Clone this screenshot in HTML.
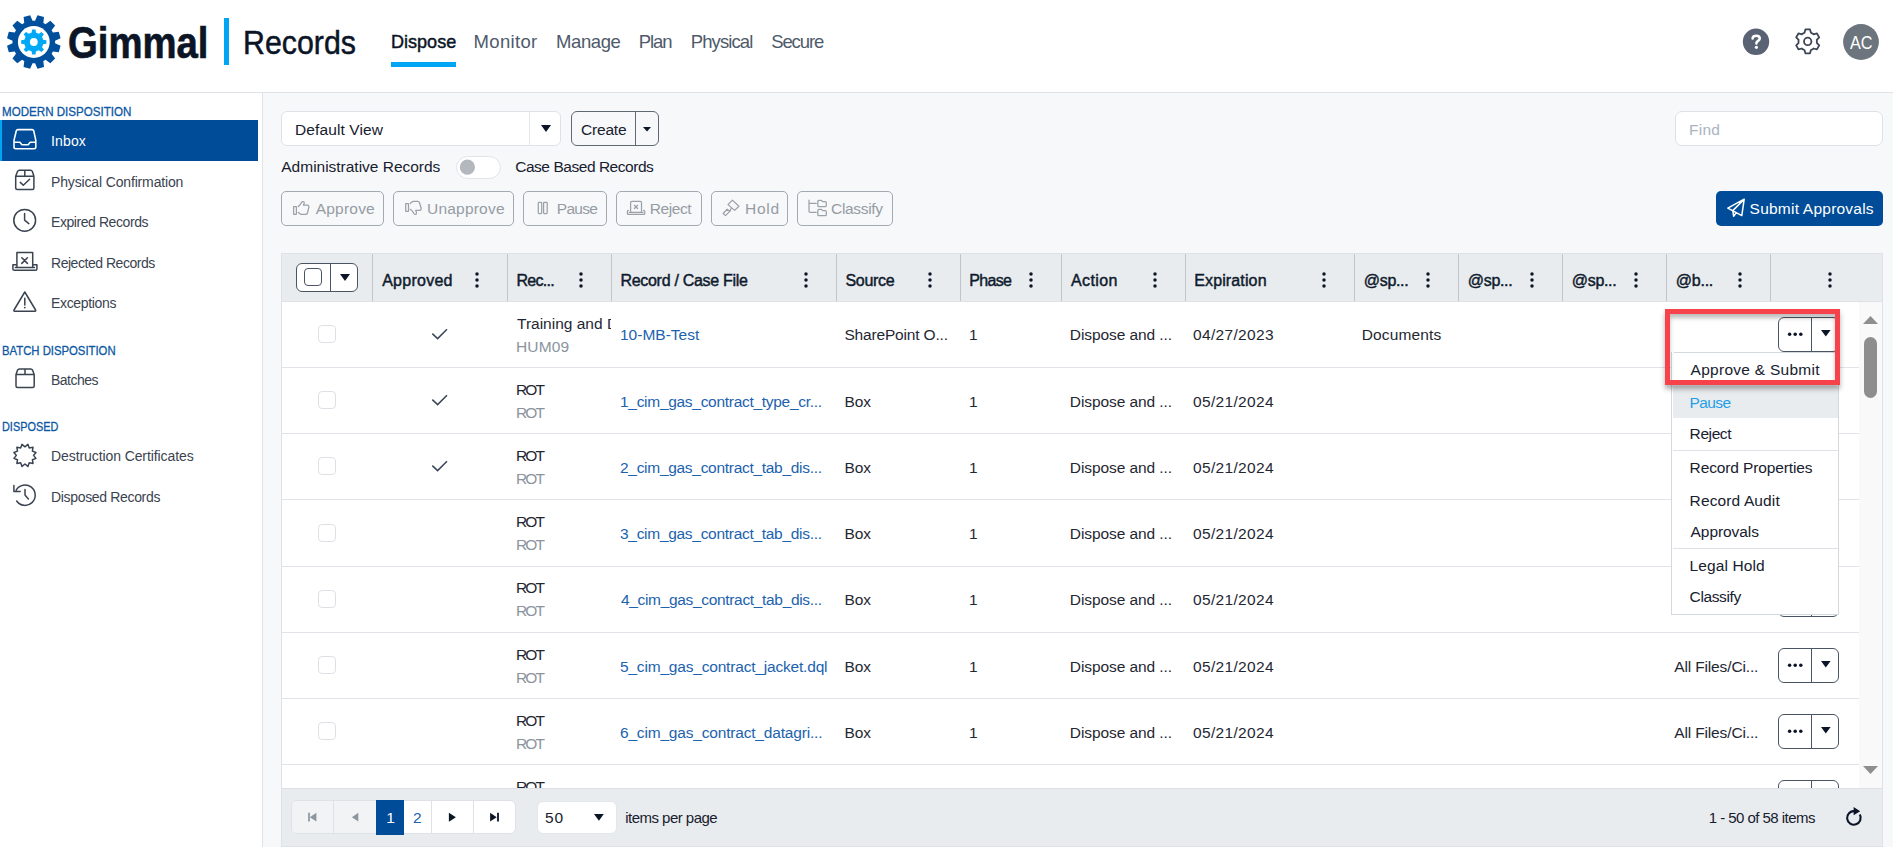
<!DOCTYPE html>
<html><head><meta charset="utf-8"><title>Gimmal Records - Dispose</title>
<style>
html,body{margin:0;padding:0;}
body{width:1893px;height:847px;overflow:hidden;position:relative;background:#f7f8fa;font-family:"Liberation Sans",sans-serif;}
.b{position:absolute;}
.t{position:absolute;white-space:nowrap;line-height:1;font-family:"Liberation Sans",sans-serif;}
</style></head><body>
<div class="b" style="left:0px;top:0px;width:1893px;height:92px;background:#fff;"></div>
<div class="b" style="left:0px;top:92px;width:1893px;height:1px;background:#dfe3e8;"></div>
<div class="b" style="left:0px;top:93px;width:262px;height:754px;background:#fff;"></div>
<div class="b" style="left:262px;top:93px;width:1px;height:754px;background:#dfe3e8;"></div>
<div class="b" style="left:0px;top:120px;width:258px;height:41px;background:#004c98;"></div>
<div class="b" style="left:0px;top:120px;width:2px;height:41px;background:#00a6f4;"></div>
<svg class="b" style="left:0;top:0" width="80" height="80" viewBox="0 0 80 80">
<path d="M35.08,20.74 L37.46,15.25 L44.01,17.00 L43.33,22.95 L43.89,23.24 L44.45,23.55 L45.00,23.88 L45.54,24.22 L50.34,20.66 L55.14,25.46 L51.58,30.26 L51.92,30.80 L52.25,31.35 L52.56,31.91 L52.85,32.47 L58.80,31.79 L60.55,38.34 L55.06,40.72 L55.09,41.36 L55.10,42.00 L55.09,42.64 L55.06,43.28 L60.55,45.66 L58.80,52.21 L52.85,51.53 L52.56,52.09 L52.25,52.65 L51.92,53.20 L51.58,53.74 L55.14,58.54 L50.34,63.34 L45.54,59.78 L45.00,60.12 L44.45,60.45 L43.89,60.76 L43.33,61.05 L44.01,67.00 L37.46,68.75 L35.08,63.26 L34.44,63.29 L33.80,63.30 L33.16,63.29 L32.52,63.26 L30.14,68.75 L23.59,67.00 L24.27,61.05 L23.71,60.76 L23.15,60.45 L22.60,60.12 L22.06,59.78 L17.26,63.34 L12.46,58.54 L16.02,53.74 L15.68,53.20 L15.35,52.65 L15.04,52.09 L14.75,51.53 L8.80,52.21 L7.05,45.66 L12.54,43.28 L12.51,42.64 L12.50,42.00 L12.51,41.36 L12.54,40.72 L7.05,38.34 L8.80,31.79 L14.75,32.47 L15.04,31.91 L15.35,31.35 L15.68,30.80 L16.02,30.26 L12.46,25.46 L17.26,20.66 L22.06,24.22 L22.60,23.88 L23.15,23.55 L23.71,23.24 L24.27,22.95 L23.59,17.00 L30.14,15.25 L32.52,20.74 L33.16,20.71 L33.80,20.70 L34.44,20.71Z" fill="#00509e"/>
<circle cx="33.8" cy="42" r="15.9" fill="#fff"/>
<path d="M31.62,32.65 L32.11,29.41 L35.49,29.41 L35.98,32.65 L36.74,32.86 L37.47,33.13 L38.19,33.46 L38.87,33.85 L41.50,31.90 L43.90,34.30 L41.95,36.93 L42.34,37.61 L42.67,38.33 L42.94,39.06 L43.15,39.82 L46.39,40.31 L46.39,43.69 L43.15,44.18 L42.94,44.94 L42.67,45.67 L42.34,46.39 L41.95,47.07 L43.90,49.70 L41.50,52.10 L38.87,50.15 L38.19,50.54 L37.47,50.87 L36.74,51.14 L35.98,51.35 L35.49,54.59 L32.11,54.59 L31.62,51.35 L30.86,51.14 L30.13,50.87 L29.41,50.54 L28.73,50.15 L26.10,52.10 L23.70,49.70 L25.65,47.07 L25.26,46.39 L24.93,45.67 L24.66,44.94 L24.45,44.18 L21.21,43.69 L21.21,40.31 L24.45,39.82 L24.66,39.06 L24.93,38.33 L25.26,37.61 L25.65,36.93 L23.70,34.30 L26.10,31.90 L28.73,33.85 L29.41,33.46 L30.13,33.13 L30.86,32.86Z" fill="#00a8f5"/>
<circle cx="33.8" cy="42" r="3.9" fill="#fff"/>
</svg>
<div class="b" style="left:224px;top:18px;width:5px;height:47px;background:#00a6f4;"></div>
<div class="b" style="left:391px;top:62px;width:65px;height:5px;background:#00a6f4;"></div>
<svg class="b" style="left:1730px;top:15px" width="160" height="55" viewBox="1730 15 160 55">
<circle cx="1756" cy="41.8" r="13.2" fill="#596373"/>
<path d="M1752.6,38.6 C1752.6,36.6 1754.2,35.8 1756.2,35.8 C1758.4,35.8 1759.8,37 1759.8,38.6 C1759.8,40.6 1756.6,41 1756.4,42.8 L1756.4,43.6" fill="none" stroke="#fff" stroke-width="2.5" stroke-linecap="round"/>
<circle cx="1756.4" cy="47.3" r="1.6" fill="#fff"/>
<path d="M1804.47,32.79 L1805.41,29.42 L1809.99,29.42 L1810.93,32.79 L1811.63,33.08 L1812.30,33.43 L1812.94,33.84 L1813.55,34.30 L1816.94,33.43 L1819.22,37.39 L1816.78,39.89 L1816.87,40.64 L1816.90,41.40 L1816.87,42.16 L1816.78,42.91 L1819.22,45.41 L1816.94,49.37 L1813.55,48.50 L1812.94,48.96 L1812.30,49.37 L1811.63,49.72 L1810.93,50.01 L1809.99,53.38 L1805.41,53.38 L1804.47,50.01 L1803.77,49.72 L1803.10,49.37 L1802.46,48.96 L1801.85,48.50 L1798.46,49.37 L1796.18,45.41 L1798.62,42.91 L1798.53,42.16 L1798.50,41.40 L1798.53,40.64 L1798.62,39.89 L1796.18,37.39 L1798.46,33.43 L1801.85,34.30 L1802.46,33.84 L1803.10,33.43 L1803.77,33.08Z" fill="none" stroke="#3b4554" stroke-width="1.8" stroke-linejoin="round"/>
<circle cx="1807.7" cy="41.4" r="3.7" fill="none" stroke="#3b4554" stroke-width="1.8"/>
<circle cx="1861" cy="42" r="17.9" fill="#6c757d"/>
</svg>
<div class="b" style="left:281px;top:111px;width:280px;height:35px;background:#fff;border:1px solid #dee2e6;border-radius:6px;box-sizing:border-box;"></div>
<div class="b" style="left:529px;top:112px;width:1px;height:33px;background:#e3e6ea;"></div>
<svg class="b" style="left:541.0px;top:124.5px" width="11.0" height="8.0"><path d="M0,0 L10.00,0 L5.00,7.00Z" fill="#0b1526"/></svg>
<div class="b" style="left:571px;top:111px;width:88px;height:35px;border:1px solid #5f6873;border-radius:6px;box-sizing:border-box;"></div>
<div class="b" style="left:635px;top:112px;width:1px;height:33px;background:#5f6873;"></div>
<svg class="b" style="left:643.0px;top:126.6px" width="9.0" height="5.4"><path d="M0,0 L8.00,0 L4.00,4.40Z" fill="#0b1526"/></svg>
<div class="b" style="left:456px;top:156px;width:45px;height:23px;background:#fff;border:1px solid #e1e4e8;border-radius:12px;box-sizing:border-box;"></div>
<svg class="b" style="left:455px;top:155px" width="30" height="25"><circle cx="12.4" cy="12.2" r="7.6" fill="#b3b8bf"/></svg>
<div class="b" style="left:281px;top:191px;width:103px;height:35px;border:1px solid #a2a9b0;border-radius:5px;box-sizing:border-box;"></div>
<div class="b" style="left:393px;top:191px;width:121px;height:35px;border:1px solid #a2a9b0;border-radius:5px;box-sizing:border-box;"></div>
<div class="b" style="left:523px;top:191px;width:84px;height:35px;border:1px solid #a2a9b0;border-radius:5px;box-sizing:border-box;"></div>
<div class="b" style="left:616px;top:191px;width:86px;height:35px;border:1px solid #a2a9b0;border-radius:5px;box-sizing:border-box;"></div>
<div class="b" style="left:711px;top:191px;width:77px;height:35px;border:1px solid #a2a9b0;border-radius:5px;box-sizing:border-box;"></div>
<div class="b" style="left:797px;top:191px;width:96px;height:35px;border:1px solid #a2a9b0;border-radius:5px;box-sizing:border-box;"></div>
<svg class="b" style="left:0;top:0" width="900" height="240" viewBox="0 0 900 240">
<rect x="293.6" y="206.6" width="2.8" height="7.8" rx="0.3" fill="none" stroke="#9aa1a8" stroke-width="1.25" stroke-linejoin="round" stroke-linecap="round"/>
<path d="M298.2,206.6 C299.8,205.6 300.6,204.4 301.4,202.6 C301.9,201.6 303.2,201.3 304,202 C304.6,202.6 304.4,203.6 303.4,205.2 H307.3 C308.4,205.2 309.1,206.1 308.9,207.1 L307.4,213 C307.2,213.9 306.5,214.4 305.6,214.4 H301.3 C300.2,214.4 299.3,213.4 298.2,212.4" fill="none" stroke="#9aa1a8" stroke-width="1.25" stroke-linejoin="round" stroke-linecap="round"/>
<rect x="405.7" y="203.5" width="2.8" height="7.8" rx="0.3" fill="none" stroke="#9aa1a8" stroke-width="1.25" stroke-linejoin="round" stroke-linecap="round"/>
<path d="M410.2,203.6 C411.2,202.4 412.2,201.4 413.6,201.4 H417.8 C418.6,201.4 419.2,201.9 419.5,202.7 L421.1,208 C421.4,209.3 420.8,210.3 419.6,210.3 H415.6 C416.4,211.8 416.9,212.8 416.5,213.6 C416,214.5 414.8,214.6 414.2,213.8 C413.2,212.2 412.4,210.4 410.2,209.3" fill="none" stroke="#9aa1a8" stroke-width="1.25" stroke-linejoin="round" stroke-linecap="round"/>
<rect x="538.3" y="202.3" width="3.4" height="11.2" rx="0.8" fill="none" stroke="#9aa1a8" stroke-width="1.25" stroke-linejoin="round" stroke-linecap="round"/>
<rect x="543.6" y="202.3" width="3.6" height="11.2" rx="0.8" fill="none" stroke="#9aa1a8" stroke-width="1.25" stroke-linejoin="round" stroke-linecap="round"/>
<path d="M630.6,212.2 V202.6 Q630.6,201.3 631.9,201.3 H640.2 Q641.5,201.3 641.5,202.6 V212.2 M629.3,212.4 H642.9 M628.4,210.4 Q627.4,210.5 627.4,211.6 V213.4 Q627.4,214.4 628.4,214.4 H643.8 Q644.8,214.4 644.8,213.4 V211.6 Q644.8,210.5 643.6,210.4 M634.4,205.3 L637.6,208.5 M637.6,205.3 L634.4,208.5" fill="none" stroke="#9aa1a8" stroke-width="1.25" stroke-linejoin="round" stroke-linecap="round"/>
<path d="M732.4,200.1 L738.9,206.3 L734.6,210.4 L728,204.6 Z" fill="none" stroke="#9aa1a8" stroke-width="1.25" stroke-linejoin="round" stroke-linecap="round"/>
<path d="M727.2,209.2 L729.8,211.4 L725.5,215.6 L723.1,213.5 Z M729.8,211.4 L731.3,208.3" fill="none" stroke="#9aa1a8" stroke-width="1.25" stroke-linejoin="round" stroke-linecap="round"/>
<path d="M809,200.2 V211.2 Q809,212.3 810.1,212.3 H816.2 M809,203.3 H816.2" fill="none" stroke="#9aa1a8" stroke-width="1.25" stroke-linejoin="round" stroke-linecap="round"/>
<path d="M817.8,201.4 Q817.8,200.3 818.8,200.3 H821.4 L822.6,201.6 H825.4 Q826.3,201.6 826.3,202.5 V205.6 Q826.3,206.5 825.4,206.5 H818.7 Q817.8,206.5 817.8,205.6 Z" fill="none" stroke="#9aa1a8" stroke-width="1.25" stroke-linejoin="round" stroke-linecap="round"/>
<path d="M817.8,210.5 Q817.8,209.4 818.8,209.4 H821.4 L822.6,210.6 H825.4 Q826.3,210.6 826.3,211.5 V214.7 Q826.3,215.6 825.4,215.6 H818.7 Q817.8,215.6 817.8,214.7 Z" fill="none" stroke="#9aa1a8" stroke-width="1.25" stroke-linejoin="round" stroke-linecap="round"/>
</svg>
<div class="b" style="left:1675px;top:111px;width:208px;height:35px;background:#fff;border:1px solid #dee2e6;border-radius:7px;box-sizing:border-box;"></div>
<div class="b" style="left:1716px;top:191px;width:167px;height:35px;background:#004c98;border-radius:5px;"></div>
<svg class="b" style="left:1725px;top:196px" width="24" height="24" viewBox="0 0 24 24">
<path d="M2.8,12.2 L19.2,3.2 L16.8,19.6 Z M19.2,3.2 L7.8,14.6 L8.6,20.2 L11.6,16.4" fill="none" stroke="#fff" stroke-width="1.5" stroke-linejoin="round"/>
</svg>
<div class="b" style="left:281px;top:253px;width:1602px;height:594px;background:#fff;border:1px solid #dee2e6;box-sizing:border-box;"></div>
<div class="b" style="left:281px;top:253px;width:1602px;height:48px;background:#e9ecef;border:1px solid #dee2e6;border-bottom:none;box-sizing:border-box;"></div>
<div class="b" style="left:281px;top:301px;width:1602px;height:1px;background:#dee2e6;"></div>
<div class="b" style="left:372px;top:254px;width:1px;height:47px;background:#bfc5cb;"></div>
<div class="b" style="left:507px;top:254px;width:1px;height:47px;background:#bfc5cb;"></div>
<div class="b" style="left:611px;top:254px;width:1px;height:47px;background:#bfc5cb;"></div>
<div class="b" style="left:836px;top:254px;width:1px;height:47px;background:#bfc5cb;"></div>
<div class="b" style="left:960px;top:254px;width:1px;height:47px;background:#bfc5cb;"></div>
<div class="b" style="left:1061px;top:254px;width:1px;height:47px;background:#bfc5cb;"></div>
<div class="b" style="left:1185px;top:254px;width:1px;height:47px;background:#bfc5cb;"></div>
<div class="b" style="left:1354px;top:254px;width:1px;height:47px;background:#bfc5cb;"></div>
<div class="b" style="left:1458px;top:254px;width:1px;height:47px;background:#bfc5cb;"></div>
<div class="b" style="left:1562px;top:254px;width:1px;height:47px;background:#bfc5cb;"></div>
<div class="b" style="left:1666px;top:254px;width:1px;height:47px;background:#bfc5cb;"></div>
<div class="b" style="left:1770px;top:254px;width:1px;height:47px;background:#bfc5cb;"></div>
<svg class="b" style="left:473px;top:269.5px" width="8" height="20"><circle cx="4" cy="4" r="1.75" fill="#0b1526"/><circle cx="4" cy="10" r="1.75" fill="#0b1526"/><circle cx="4" cy="16" r="1.75" fill="#0b1526"/></svg>
<svg class="b" style="left:577px;top:269.5px" width="8" height="20"><circle cx="4" cy="4" r="1.75" fill="#0b1526"/><circle cx="4" cy="10" r="1.75" fill="#0b1526"/><circle cx="4" cy="16" r="1.75" fill="#0b1526"/></svg>
<svg class="b" style="left:802px;top:269.5px" width="8" height="20"><circle cx="4" cy="4" r="1.75" fill="#0b1526"/><circle cx="4" cy="10" r="1.75" fill="#0b1526"/><circle cx="4" cy="16" r="1.75" fill="#0b1526"/></svg>
<svg class="b" style="left:926px;top:269.5px" width="8" height="20"><circle cx="4" cy="4" r="1.75" fill="#0b1526"/><circle cx="4" cy="10" r="1.75" fill="#0b1526"/><circle cx="4" cy="16" r="1.75" fill="#0b1526"/></svg>
<svg class="b" style="left:1027px;top:269.5px" width="8" height="20"><circle cx="4" cy="4" r="1.75" fill="#0b1526"/><circle cx="4" cy="10" r="1.75" fill="#0b1526"/><circle cx="4" cy="16" r="1.75" fill="#0b1526"/></svg>
<svg class="b" style="left:1151px;top:269.5px" width="8" height="20"><circle cx="4" cy="4" r="1.75" fill="#0b1526"/><circle cx="4" cy="10" r="1.75" fill="#0b1526"/><circle cx="4" cy="16" r="1.75" fill="#0b1526"/></svg>
<svg class="b" style="left:1320px;top:269.5px" width="8" height="20"><circle cx="4" cy="4" r="1.75" fill="#0b1526"/><circle cx="4" cy="10" r="1.75" fill="#0b1526"/><circle cx="4" cy="16" r="1.75" fill="#0b1526"/></svg>
<svg class="b" style="left:1424px;top:269.5px" width="8" height="20"><circle cx="4" cy="4" r="1.75" fill="#0b1526"/><circle cx="4" cy="10" r="1.75" fill="#0b1526"/><circle cx="4" cy="16" r="1.75" fill="#0b1526"/></svg>
<svg class="b" style="left:1528px;top:269.5px" width="8" height="20"><circle cx="4" cy="4" r="1.75" fill="#0b1526"/><circle cx="4" cy="10" r="1.75" fill="#0b1526"/><circle cx="4" cy="16" r="1.75" fill="#0b1526"/></svg>
<svg class="b" style="left:1632px;top:269.5px" width="8" height="20"><circle cx="4" cy="4" r="1.75" fill="#0b1526"/><circle cx="4" cy="10" r="1.75" fill="#0b1526"/><circle cx="4" cy="16" r="1.75" fill="#0b1526"/></svg>
<svg class="b" style="left:1736px;top:269.5px" width="8" height="20"><circle cx="4" cy="4" r="1.75" fill="#0b1526"/><circle cx="4" cy="10" r="1.75" fill="#0b1526"/><circle cx="4" cy="16" r="1.75" fill="#0b1526"/></svg>
<svg class="b" style="left:1826px;top:269.5px" width="8" height="20"><circle cx="4" cy="4" r="1.75" fill="#0b1526"/><circle cx="4" cy="10" r="1.75" fill="#0b1526"/><circle cx="4" cy="16" r="1.75" fill="#0b1526"/></svg>
<div class="b" style="left:296px;top:263px;width:62px;height:29px;background:#fff;border:1px solid #4a5563;border-radius:6px;box-sizing:border-box;"></div>
<div class="b" style="left:330px;top:264px;width:1px;height:27px;background:#4a5563;"></div>
<div class="b" style="left:304px;top:268px;width:18px;height:18px;border:1px solid #4a5563;border-radius:4px;box-sizing:border-box;"></div>
<svg class="b" style="left:340.0px;top:273.5px" width="11.0" height="8.0"><path d="M0,0 L10.00,0 L5.00,7.00Z" fill="#0b1526"/></svg>
<div class="b" style="left:1859px;top:302px;width:23px;height:486px;background:#f9f9f9;"></div>
<svg class="b" style="left:1863.0px;top:316.0px" width="16.0" height="9.0"><path d="M0,8.00 L15.00,8.00 L7.50,0Z" fill="#8e8e8e"/></svg>
<div class="b" style="left:1864px;top:337px;width:13px;height:61px;background:#8e8e8e;border-radius:6.5px;"></div>
<svg class="b" style="left:1863.0px;top:766.0px" width="16.0" height="9.0"><path d="M0,0 L15.00,0 L7.50,8.00Z" fill="#8e8e8e"/></svg>
<div class="b" style="left:282px;top:367px;width:1577px;height:1px;background:#e0e3e7;"></div>
<div class="b" style="left:282px;top:433px;width:1577px;height:1px;background:#e0e3e7;"></div>
<div class="b" style="left:282px;top:499px;width:1577px;height:1px;background:#e0e3e7;"></div>
<div class="b" style="left:282px;top:566px;width:1577px;height:1px;background:#e0e3e7;"></div>
<div class="b" style="left:282px;top:632px;width:1577px;height:1px;background:#e0e3e7;"></div>
<div class="b" style="left:282px;top:698px;width:1577px;height:1px;background:#e0e3e7;"></div>
<div class="b" style="left:282px;top:764px;width:1577px;height:1px;background:#e0e3e7;"></div>
<div class="b" style="left:318px;top:325px;width:18px;height:18px;background:#fff;border:1px solid #dde1e5;border-radius:4px;box-sizing:border-box;"></div>
<svg class="b" style="left:428px;top:324.0px" width="24" height="20"><path d="M4.3,9.6 L9.6,14.6 L19,5.2" fill="none" stroke="#3a4657" stroke-width="1.5"/></svg>
<div class="b" style="left:318px;top:391px;width:18px;height:18px;background:#fff;border:1px solid #dde1e5;border-radius:4px;box-sizing:border-box;"></div>
<svg class="b" style="left:428px;top:390.0px" width="24" height="20"><path d="M4.3,9.6 L9.6,14.6 L19,5.2" fill="none" stroke="#3a4657" stroke-width="1.5"/></svg>
<div class="b" style="left:318px;top:457px;width:18px;height:18px;background:#fff;border:1px solid #dde1e5;border-radius:4px;box-sizing:border-box;"></div>
<svg class="b" style="left:428px;top:456.0px" width="24" height="20"><path d="M4.3,9.6 L9.6,14.6 L19,5.2" fill="none" stroke="#3a4657" stroke-width="1.5"/></svg>
<div class="b" style="left:318px;top:524px;width:18px;height:18px;background:#fff;border:1px solid #dde1e5;border-radius:4px;box-sizing:border-box;"></div>
<div class="b" style="left:318px;top:590px;width:18px;height:18px;background:#fff;border:1px solid #dde1e5;border-radius:4px;box-sizing:border-box;"></div>
<div class="b" style="left:1778px;top:582px;width:61px;height:35px;background:#fff;border:1px solid #4a5563;border-radius:6px;box-sizing:border-box;"></div>
<div class="b" style="left:1811px;top:583px;width:1px;height:33px;background:#4a5563;"></div>
<svg class="b" style="left:1786px;top:594.0px" width="20" height="10"><circle cx="3.6" cy="5.2" r="1.75" fill="#0b1526"/><circle cx="9.2" cy="5.2" r="1.75" fill="#0b1526"/><circle cx="14.8" cy="5.2" r="1.75" fill="#0b1526"/></svg>
<svg class="b" style="left:1821.3px;top:594.7px" width="10.6" height="7.6"><path d="M0,0 L9.60,0 L4.80,6.60Z" fill="#0b1526"/></svg>
<div class="b" style="left:318px;top:656px;width:18px;height:18px;background:#fff;border:1px solid #dde1e5;border-radius:4px;box-sizing:border-box;"></div>
<div class="b" style="left:1778px;top:648px;width:61px;height:35px;background:#fff;border:1px solid #4a5563;border-radius:6px;box-sizing:border-box;"></div>
<div class="b" style="left:1811px;top:649px;width:1px;height:33px;background:#4a5563;"></div>
<svg class="b" style="left:1786px;top:660.0px" width="20" height="10"><circle cx="3.6" cy="5.2" r="1.75" fill="#0b1526"/><circle cx="9.2" cy="5.2" r="1.75" fill="#0b1526"/><circle cx="14.8" cy="5.2" r="1.75" fill="#0b1526"/></svg>
<svg class="b" style="left:1821.3px;top:660.7px" width="10.6" height="7.6"><path d="M0,0 L9.60,0 L4.80,6.60Z" fill="#0b1526"/></svg>
<div class="b" style="left:318px;top:722px;width:18px;height:18px;background:#fff;border:1px solid #dde1e5;border-radius:4px;box-sizing:border-box;"></div>
<div class="b" style="left:1778px;top:714px;width:61px;height:35px;background:#fff;border:1px solid #4a5563;border-radius:6px;box-sizing:border-box;"></div>
<div class="b" style="left:1811px;top:715px;width:1px;height:33px;background:#4a5563;"></div>
<svg class="b" style="left:1786px;top:726.0px" width="20" height="10"><circle cx="3.6" cy="5.2" r="1.75" fill="#0b1526"/><circle cx="9.2" cy="5.2" r="1.75" fill="#0b1526"/><circle cx="14.8" cy="5.2" r="1.75" fill="#0b1526"/></svg>
<svg class="b" style="left:1821.3px;top:726.7px" width="10.6" height="7.6"><path d="M0,0 L9.60,0 L4.80,6.60Z" fill="#0b1526"/></svg>
<div class="b" style="left:1778px;top:780px;width:61px;height:35px;background:#fff;border:1px solid #4a5563;border-radius:6px;box-sizing:border-box;"></div>
<div class="b" style="left:1811px;top:781px;width:1px;height:33px;background:#4a5563;"></div>
<svg class="b" style="left:1786px;top:792.0px" width="20" height="10"><circle cx="3.6" cy="5.2" r="1.75" fill="#0b1526"/><circle cx="9.2" cy="5.2" r="1.75" fill="#0b1526"/><circle cx="14.8" cy="5.2" r="1.75" fill="#0b1526"/></svg>
<svg class="b" style="left:1821.3px;top:792.7px" width="10.6" height="7.6"><path d="M0,0 L9.60,0 L4.80,6.60Z" fill="#0b1526"/></svg>
<svg class="b" style="left:0;top:100px" width="60" height="420" viewBox="0 100 60 420">
<path d="M17.9,129.6 H32.1 Q33.3,129.6 33.7,130.7 L35.8,140.4 V147.1 Q35.8,148.8 34.1,148.8 H15.7 Q14,148.8 14,147.1 V140.4 L16.3,130.7 Q16.7,129.6 17.9,129.6 Z M14,142.3 H19.5 Q20.2,142.3 20.6,143 L21.5,144.2 Q22,144.8 22.8,144.8 H27.4 Q28.2,144.8 28.6,144.2 L29.5,143 Q29.9,142.3 30.6,142.3 H35.8" fill="none" stroke="#fff" stroke-width="1.6" stroke-linejoin="round" stroke-linecap="round"/>
<path d="M15.7,176.3 L17.5,171.5 Q18,170.3 19.3,170.3 H30.6 Q31.9,170.3 32.4,171.5 L33.9,176.3 V188 Q33.9,189.5 32.4,189.5 H17.2 Q15.7,189.5 15.7,188 Z M15.7,176.3 H33.9 M24.8,170.3 V176.3 M20.3,182.4 L23.3,185.3 L29.6,179.3" fill="none" stroke="#3a4350" stroke-width="1.5" stroke-linejoin="round" stroke-linecap="round"/>
<circle cx="24.7" cy="220.3" r="10.9" fill="none" stroke="#3a4350" stroke-width="1.5" stroke-linejoin="round" stroke-linecap="round"/>
<path d="M24.6,213.6 v6.6 l4.2,3.4" fill="none" stroke="#3a4350" stroke-width="1.5" stroke-linejoin="round" stroke-linecap="round"/>
<path d="M16.9,267.4 V252.4 H32.7 V267.4 M15.6,264.8 H12.9 V269 Q12.9,270.3 14.2,270.3 H35.6 Q36.9,270.3 36.9,269 V264.8 H34 M15.4,267.6 H34.4 M21.8,257.8 l5.6,5.6 M27.4,257.8 l-5.6,5.6" fill="none" stroke="#3a4350" stroke-width="1.5" stroke-linejoin="round" stroke-linecap="round"/>
<path d="M24.8,292 L35.6,310 c0.4,0.6 0,1.2 -0.6,1.2 h-20.4 c-0.6,0 -1,-0.6 -0.6,-1.2z M24.8,298.2 v6.8" fill="none" stroke="#3a4350" stroke-width="1.5" stroke-linejoin="round" stroke-linecap="round"/>
<circle cx="24.8" cy="307.6" r="0.9" fill="#3a4350"/>
<path d="M16,374.6 L17.6,370.1 Q18.1,368.9 19.4,368.9 H30.7 Q32,368.9 32.5,370.1 L34.2,374.6 V386 Q34.2,387.5 32.7,387.5 H17.5 Q16,387.5 16,386 Z M16,374.6 H34.2 M25,368.9 V374.6" fill="none" stroke="#3a4350" stroke-width="1.5" stroke-linejoin="round" stroke-linecap="round"/>
<path d="M27.90,444.39 L29.25,447.95 L33.01,447.34 L32.40,451.10 L35.96,452.45 L33.55,455.40 L35.96,458.35 L32.40,459.70 L33.01,463.46 L29.25,462.85 L27.90,466.41 L24.95,464.00 L22.00,466.41 L20.65,462.85 L16.89,463.46 L17.50,459.70 L13.94,458.35 L16.35,455.40 L13.94,452.45 L17.50,451.10 L16.89,447.34 L20.65,447.95 L22.00,444.39 L24.95,446.80Z" fill="none" stroke="#3a4350" stroke-width="1.5" stroke-linejoin="round" stroke-linecap="round"/>
<path d="M16.17,490.1 A10.2,10.2 0 1 1 16.64,501.05 M13.9,485.4 V491.6 H20.2 M25,489.6 V495.1 L28.4,499" fill="none" stroke="#3a4350" stroke-width="1.5" stroke-linejoin="round" stroke-linecap="round"/>
</svg>
<div class="t" style="left:68.15px;top:20.00px;font-size:45px;color:#0b1526;font-weight:700;-webkit-text-stroke:0.7px #0b1526;transform:scaleX(0.8509);transform-origin:0 0;">Gimmal</div>
<div class="t" style="left:242.76px;top:26.00px;font-size:33px;color:#0b1526;-webkit-text-stroke:0.5px #0b1526;transform:scaleX(0.9192);transform-origin:0 0;">Records</div>
<div class="t" style="left:391.22px;top:33.00px;font-size:18.5px;color:#0b1526;-webkit-text-stroke:0.45px #0b1526;transform:scaleX(0.9754);transform-origin:0 0;">Dispose</div>
<div class="t" style="left:473.60px;top:33.00px;font-size:18.5px;color:#4e5a6a;letter-spacing:0.333px;">Monitor</div>
<div class="t" style="left:556.10px;top:33.00px;font-size:18.5px;color:#4e5a6a;letter-spacing:-0.420px;">Manage</div>
<div class="t" style="left:638.80px;top:33.00px;font-size:18.5px;color:#4e5a6a;letter-spacing:-1.100px;">Plan</div>
<div class="t" style="left:690.80px;top:33.00px;font-size:18.5px;color:#4e5a6a;letter-spacing:-0.914px;">Physical</div>
<div class="t" style="left:771.20px;top:33.00px;font-size:18.5px;color:#4e5a6a;letter-spacing:-1.100px;">Secure</div>
<div class="t" style="left:1849.50px;top:34.00px;font-size:18.5px;color:#ffffff;transform:scaleX(0.8760);transform-origin:0 0;">AC</div>
<div class="t" style="left:1.68px;top:106.00px;font-size:12.6px;color:#0b57a4;-webkit-text-stroke:0.3px #0b57a4;transform:scaleX(0.9201);transform-origin:0 0;">MODERN DISPOSITION</div>
<div class="t" style="left:51.00px;top:134.00px;font-size:14px;color:#ffffff;letter-spacing:0.150px;">Inbox</div>
<div class="t" style="left:51.00px;top:175.00px;font-size:14px;color:#3a4350;letter-spacing:-0.150px;">Physical Confirmation</div>
<div class="t" style="left:51.00px;top:215.00px;font-size:14px;color:#3a4350;letter-spacing:-0.429px;">Expired Records</div>
<div class="t" style="left:51.00px;top:256.00px;font-size:14px;color:#3a4350;letter-spacing:-0.467px;">Rejected Records</div>
<div class="t" style="left:51.00px;top:296.00px;font-size:14px;color:#3a4350;letter-spacing:-0.333px;">Exceptions</div>
<div class="t" style="left:1.50px;top:345.00px;font-size:12.6px;color:#0b57a4;-webkit-text-stroke:0.3px #0b57a4;transform:scaleX(0.8984);transform-origin:0 0;">BATCH DISPOSITION</div>
<div class="t" style="left:51.00px;top:373.00px;font-size:14px;color:#3a4350;letter-spacing:-0.500px;">Batches</div>
<div class="t" style="left:1.53px;top:421.00px;font-size:12.6px;color:#0b57a4;-webkit-text-stroke:0.3px #0b57a4;transform:scaleX(0.8656);transform-origin:0 0;">DISPOSED</div>
<div class="t" style="left:51.00px;top:449.00px;font-size:14px;color:#3a4350;letter-spacing:-0.087px;">Destruction Certificates</div>
<div class="t" style="left:51.00px;top:490.00px;font-size:14px;color:#3a4350;letter-spacing:-0.333px;">Disposed Records</div>
<div class="t" style="left:295.00px;top:122.00px;font-size:15.5px;color:#17202e;letter-spacing:0.118px;">Default View</div>
<div class="t" style="left:581.00px;top:122.00px;font-size:15.5px;color:#17202e;letter-spacing:-0.200px;">Create</div>
<div class="t" style="left:281.30px;top:159.00px;font-size:15.5px;color:#17202e;letter-spacing:-0.014px;">Administrative Records</div>
<div class="t" style="left:515.20px;top:159.00px;font-size:15.5px;color:#17202e;letter-spacing:-0.459px;">Case Based Records</div>
<div class="t" style="left:315.70px;top:201.00px;font-size:15.5px;color:#959ca4;letter-spacing:0.217px;">Approve</div>
<div class="t" style="left:427.00px;top:201.00px;font-size:15.5px;color:#959ca4;letter-spacing:0.213px;">Unapprove</div>
<div class="t" style="left:556.80px;top:201.00px;font-size:15.5px;color:#959ca4;letter-spacing:-0.725px;">Pause</div>
<div class="t" style="left:649.80px;top:201.00px;font-size:15.5px;color:#959ca4;letter-spacing:-0.440px;">Reject</div>
<div class="t" style="left:745.00px;top:201.00px;font-size:15.5px;color:#959ca4;letter-spacing:0.733px;">Hold</div>
<div class="t" style="left:831.00px;top:201.00px;font-size:15.5px;color:#959ca4;letter-spacing:-0.314px;">Classify</div>
<div class="t" style="left:1689.00px;top:122.00px;font-size:15.5px;color:#a9b3bf;letter-spacing:0.233px;">Find</div>
<div class="t" style="left:1749.60px;top:201.00px;font-size:15.5px;color:#ffffff;letter-spacing:0.227px;">Submit Approvals</div>
<div class="t" style="left:382.20px;top:273.00px;font-size:16px;color:#0f1b2d;-webkit-text-stroke:0.45px #0f1b2d;letter-spacing:0.257px;">Approved</div>
<div class="t" style="left:516.50px;top:273.00px;font-size:16px;color:#0f1b2d;-webkit-text-stroke:0.45px #0f1b2d;letter-spacing:-0.700px;">Rec...</div>
<div class="t" style="left:620.40px;top:273.00px;font-size:16px;color:#0f1b2d;-webkit-text-stroke:0.45px #0f1b2d;letter-spacing:-0.288px;">Record / Case File</div>
<div class="t" style="left:845.50px;top:273.00px;font-size:16px;color:#0f1b2d;-webkit-text-stroke:0.45px #0f1b2d;letter-spacing:-0.300px;">Source</div>
<div class="t" style="left:969.30px;top:273.00px;font-size:16px;color:#0f1b2d;-webkit-text-stroke:0.45px #0f1b2d;letter-spacing:-0.675px;">Phase</div>
<div class="t" style="left:1071.00px;top:273.00px;font-size:16px;color:#0f1b2d;-webkit-text-stroke:0.45px #0f1b2d;letter-spacing:0.400px;">Action</div>
<div class="t" style="left:1194.20px;top:273.00px;font-size:16px;color:#0f1b2d;-webkit-text-stroke:0.45px #0f1b2d;letter-spacing:0.133px;">Expiration</div>
<div class="t" style="left:1363.80px;top:273.00px;font-size:16px;color:#0f1b2d;-webkit-text-stroke:0.45px #0f1b2d;letter-spacing:-0.320px;">@sp...</div>
<div class="t" style="left:1467.80px;top:273.00px;font-size:16px;color:#0f1b2d;-webkit-text-stroke:0.45px #0f1b2d;letter-spacing:-0.320px;">@sp...</div>
<div class="t" style="left:1571.80px;top:273.00px;font-size:16px;color:#0f1b2d;-webkit-text-stroke:0.45px #0f1b2d;letter-spacing:-0.320px;">@sp...</div>
<div class="t" style="left:1675.80px;top:273.00px;font-size:16px;color:#0f1b2d;-webkit-text-stroke:0.45px #0f1b2d;letter-spacing:-0.250px;">@b...</div>
<div class="t" style="left:517.00px;top:316.00px;font-size:15.5px;color:#1f2733;width:94px;overflow:hidden;padding-bottom:4px;">Training and D</div>
<div class="t" style="left:516.00px;top:339.00px;font-size:15.5px;color:#8b949e;letter-spacing:0.175px;">HUM09</div>
<div class="t" style="left:620.00px;top:327.00px;font-size:15.5px;color:#1c62ae;">10-MB-Test</div>
<div class="t" style="left:844.40px;top:327.00px;font-size:15.5px;color:#1f2733;letter-spacing:-0.164px;">SharePoint O...</div>
<div class="t" style="left:969.00px;top:327.00px;font-size:15.5px;color:#1f2733;">1</div>
<div class="t" style="left:1069.80px;top:327.00px;font-size:15.5px;color:#1f2733;letter-spacing:-0.086px;">Dispose and ...</div>
<div class="t" style="left:1193.00px;top:327.00px;font-size:15.5px;color:#1f2733;letter-spacing:0.333px;">04/27/2023</div>
<div class="t" style="left:1361.80px;top:327.00px;font-size:15.5px;color:#1f2733;letter-spacing:0.125px;">Documents</div>
<div class="t" style="left:516.00px;top:382.00px;font-size:15.5px;color:#1f2733;letter-spacing:-1.900px;">ROT</div>
<div class="t" style="left:516.00px;top:405.00px;font-size:15.5px;color:#8b949e;letter-spacing:-1.900px;">ROT</div>
<div class="t" style="left:620.00px;top:394.00px;font-size:15.5px;color:#1c62ae;letter-spacing:-0.293px;">1_cim_gas_contract_type_cr...</div>
<div class="t" style="left:844.40px;top:394.00px;font-size:15.5px;color:#1f2733;">Box</div>
<div class="t" style="left:969.00px;top:394.00px;font-size:15.5px;color:#1f2733;">1</div>
<div class="t" style="left:1069.80px;top:394.00px;font-size:15.5px;color:#1f2733;letter-spacing:-0.086px;">Dispose and ...</div>
<div class="t" style="left:1193.00px;top:394.00px;font-size:15.5px;color:#1f2733;letter-spacing:0.333px;">05/21/2024</div>
<div class="t" style="left:516.00px;top:448.00px;font-size:15.5px;color:#1f2733;letter-spacing:-1.900px;">ROT</div>
<div class="t" style="left:516.00px;top:471.00px;font-size:15.5px;color:#8b949e;letter-spacing:-1.900px;">ROT</div>
<div class="t" style="left:620.00px;top:460.00px;font-size:15.5px;color:#1c62ae;letter-spacing:-0.293px;">2_cim_gas_contract_tab_dis...</div>
<div class="t" style="left:844.40px;top:460.00px;font-size:15.5px;color:#1f2733;">Box</div>
<div class="t" style="left:969.00px;top:460.00px;font-size:15.5px;color:#1f2733;">1</div>
<div class="t" style="left:1069.80px;top:460.00px;font-size:15.5px;color:#1f2733;letter-spacing:-0.086px;">Dispose and ...</div>
<div class="t" style="left:1193.00px;top:460.00px;font-size:15.5px;color:#1f2733;letter-spacing:0.333px;">05/21/2024</div>
<div class="t" style="left:516.00px;top:514.00px;font-size:15.5px;color:#1f2733;letter-spacing:-1.900px;">ROT</div>
<div class="t" style="left:516.00px;top:537.00px;font-size:15.5px;color:#8b949e;letter-spacing:-1.900px;">ROT</div>
<div class="t" style="left:620.00px;top:526.00px;font-size:15.5px;color:#1c62ae;letter-spacing:-0.293px;">3_cim_gas_contract_tab_dis...</div>
<div class="t" style="left:844.40px;top:526.00px;font-size:15.5px;color:#1f2733;">Box</div>
<div class="t" style="left:969.00px;top:526.00px;font-size:15.5px;color:#1f2733;">1</div>
<div class="t" style="left:1069.80px;top:526.00px;font-size:15.5px;color:#1f2733;letter-spacing:-0.086px;">Dispose and ...</div>
<div class="t" style="left:1193.00px;top:526.00px;font-size:15.5px;color:#1f2733;letter-spacing:0.333px;">05/21/2024</div>
<div class="t" style="left:516.00px;top:580.00px;font-size:15.5px;color:#1f2733;letter-spacing:-1.900px;">ROT</div>
<div class="t" style="left:516.00px;top:603.00px;font-size:15.5px;color:#8b949e;letter-spacing:-1.900px;">ROT</div>
<div class="t" style="left:621.00px;top:592.00px;font-size:15.5px;color:#1c62ae;letter-spacing:-0.329px;">4_cim_gas_contract_tab_dis...</div>
<div class="t" style="left:844.40px;top:592.00px;font-size:15.5px;color:#1f2733;">Box</div>
<div class="t" style="left:969.00px;top:592.00px;font-size:15.5px;color:#1f2733;">1</div>
<div class="t" style="left:1069.80px;top:592.00px;font-size:15.5px;color:#1f2733;letter-spacing:-0.086px;">Dispose and ...</div>
<div class="t" style="left:1193.00px;top:592.00px;font-size:15.5px;color:#1f2733;letter-spacing:0.333px;">05/21/2024</div>
<div class="t" style="left:516.00px;top:647.00px;font-size:15.5px;color:#1f2733;letter-spacing:-1.900px;">ROT</div>
<div class="t" style="left:516.00px;top:670.00px;font-size:15.5px;color:#8b949e;letter-spacing:-1.900px;">ROT</div>
<div class="t" style="left:620.00px;top:659.00px;font-size:15.5px;color:#1c62ae;letter-spacing:-0.189px;">5_cim_gas_contract_jacket.dql</div>
<div class="t" style="left:844.40px;top:659.00px;font-size:15.5px;color:#1f2733;">Box</div>
<div class="t" style="left:969.00px;top:659.00px;font-size:15.5px;color:#1f2733;">1</div>
<div class="t" style="left:1069.80px;top:659.00px;font-size:15.5px;color:#1f2733;letter-spacing:-0.086px;">Dispose and ...</div>
<div class="t" style="left:1193.00px;top:659.00px;font-size:15.5px;color:#1f2733;letter-spacing:0.333px;">05/21/2024</div>
<div class="t" style="left:1674.20px;top:659.00px;font-size:15.5px;color:#1f2733;letter-spacing:-0.136px;">All Files/Ci...</div>
<div class="t" style="left:516.00px;top:713.00px;font-size:15.5px;color:#1f2733;letter-spacing:-1.900px;">ROT</div>
<div class="t" style="left:516.00px;top:736.00px;font-size:15.5px;color:#8b949e;letter-spacing:-1.900px;">ROT</div>
<div class="t" style="left:620.00px;top:725.00px;font-size:15.5px;color:#1c62ae;letter-spacing:-0.186px;">6_cim_gas_contract_datagri...</div>
<div class="t" style="left:844.40px;top:725.00px;font-size:15.5px;color:#1f2733;">Box</div>
<div class="t" style="left:969.00px;top:725.00px;font-size:15.5px;color:#1f2733;">1</div>
<div class="t" style="left:1069.80px;top:725.00px;font-size:15.5px;color:#1f2733;letter-spacing:-0.086px;">Dispose and ...</div>
<div class="t" style="left:1193.00px;top:725.00px;font-size:15.5px;color:#1f2733;letter-spacing:0.333px;">05/21/2024</div>
<div class="t" style="left:1674.20px;top:725.00px;font-size:15.5px;color:#1f2733;letter-spacing:-0.136px;">All Files/Ci...</div>
<div class="t" style="left:516.00px;top:779.00px;font-size:15.5px;color:#1f2733;letter-spacing:-1.900px;">ROT</div>
<div class="b" style="left:282px;top:788px;width:1600px;height:58px;background:#e9ecef;"></div>
<div class="b" style="left:282px;top:788px;width:1600px;height:1px;background:#dcdfe4;"></div>
<div class="b" style="left:291px;top:800px;width:225px;height:34px;background:#fff;border:1px solid #dee2e6;border-radius:6px;box-sizing:border-box;overflow:hidden;"></div>
<div class="b" style="left:292px;top:801px;width:84px;height:32px;background:#f1f3f5;border-radius:5px 0 0 5px;"></div>
<div class="b" style="left:333px;top:801px;width:1px;height:32px;background:#dee2e6;"></div>
<div class="b" style="left:431px;top:801px;width:1px;height:32px;background:#dee2e6;"></div>
<div class="b" style="left:473px;top:801px;width:1px;height:32px;background:#dee2e6;"></div>
<div class="b" style="left:376px;top:800px;width:28px;height:35px;background:#004c98;"></div>
<svg class="b" style="left:300px;top:805px" width="210" height="25" viewBox="300 805 210 25">
<path d="M309,812.7 v8.9" stroke="#8d959e" stroke-width="1.7"/><path d="M316.4,812.7 v8.9 l-6.6,-4.45z" fill="#8d959e"/>
<path d="M358.3,812.7 v8.9 l-6.4,-4.45z" fill="#8d959e"/>
<path d="M448.9,812.7 v9.1 l7,-4.55z" fill="#0b1526"/>
<path d="M490.1,812.7 v8.9 l6.6,-4.45z" fill="#0b1526"/><path d="M498,812.7 v8.9" stroke="#0b1526" stroke-width="1.8"/>
</svg>
<div class="b" style="left:537px;top:801px;width:80px;height:33px;background:#fff;border:1px solid #e3e6ea;border-radius:6px;box-sizing:border-box;"></div>
<svg class="b" style="left:594.2px;top:813.7px" width="10.8" height="7.8"><path d="M0,0 L9.80,0 L4.90,6.80Z" fill="#0b1526"/></svg>
<svg class="b" style="left:1842px;top:804px" width="24" height="24" viewBox="1842 804 24 24">
<path d="M1859.85,814.6 A6.8,6.8 0 1 1 1854.4,811.1" fill="none" stroke="#0b1526" stroke-width="2.1"/>
<path d="M1853.6,806.9 L1853.6,815.2 L1860.2,811.2z" fill="#0b1526"/>
</svg>
<div class="t" style="left:386.30px;top:810.00px;font-size:15.5px;color:#ffffff;">1</div>
<div class="t" style="left:413.00px;top:810.00px;font-size:15.5px;color:#1c62ae;">2</div>
<div class="t" style="left:545.00px;top:810.00px;font-size:15.5px;color:#17202e;letter-spacing:1.000px;">50</div>
<div class="t" style="left:625.30px;top:810.00px;font-size:15px;color:#17202e;letter-spacing:-0.531px;">items per page</div>
<div class="t" style="left:1708.80px;top:810.00px;font-size:15px;color:#17202e;letter-spacing:-0.547px;">1 - 50 of 58 items</div>
<div class="b" style="left:1671px;top:352px;width:168px;height:263px;background:#fff;border:1px solid #d3d8dd;border-top:none;box-sizing:border-box;"></div>
<div class="b" style="left:1674px;top:352px;width:165px;height:1px;background:#d3d8dd;"></div>
<div class="b" style="left:1673px;top:386px;width:165px;height:32px;background:#e9ecef;"></div>
<div class="b" style="left:1673px;top:450px;width:165px;height:1px;background:#dee2e6;"></div>
<div class="b" style="left:1673px;top:548px;width:165px;height:1px;background:#dee2e6;"></div>
<div class="t" style="left:1690.60px;top:362.00px;font-size:15.5px;color:#17202e;letter-spacing:0.267px;">Approve &amp; Submit</div>
<div class="t" style="left:1689.60px;top:395.00px;font-size:15.5px;color:#1e9fe6;letter-spacing:-0.625px;">Pause</div>
<div class="t" style="left:1689.60px;top:426.00px;font-size:15.5px;color:#17202e;letter-spacing:-0.400px;">Reject</div>
<div class="t" style="left:1689.60px;top:460.00px;font-size:15.5px;color:#17202e;letter-spacing:-0.125px;">Record Properties</div>
<div class="t" style="left:1689.60px;top:493.00px;font-size:15.5px;color:#17202e;letter-spacing:0.127px;">Record Audit</div>
<div class="t" style="left:1690.60px;top:524.00px;font-size:15.5px;color:#17202e;letter-spacing:-0.075px;">Approvals</div>
<div class="t" style="left:1689.60px;top:558.00px;font-size:15.5px;color:#17202e;letter-spacing:0.111px;">Legal Hold</div>
<div class="t" style="left:1689.60px;top:589.00px;font-size:15.5px;color:#17202e;letter-spacing:-0.371px;">Classify</div>
<div class="b" style="left:1778px;top:317px;width:61px;height:35px;background:#fff;border:1px solid #4a5563;border-radius:6px;box-sizing:border-box;"></div>
<div class="b" style="left:1811px;top:318px;width:1px;height:33px;background:#4a5563;"></div>
<svg class="b" style="left:1786px;top:329.0px" width="20" height="10"><circle cx="3.6" cy="5.2" r="1.75" fill="#0b1526"/><circle cx="9.2" cy="5.2" r="1.75" fill="#0b1526"/><circle cx="14.8" cy="5.2" r="1.75" fill="#0b1526"/></svg>
<svg class="b" style="left:1821.3px;top:329.7px" width="10.6" height="7.6"><path d="M0,0 L9.60,0 L4.80,6.60Z" fill="#0b1526"/></svg>
<div class="b" style="left:1665px;top:309px;width:175px;height:76px;border:5px solid #f8424b;box-sizing:border-box;box-shadow:0 4px 5px rgba(0,0,0,0.32), inset 0 4px 4px rgba(0,0,0,0.26);"></div>
</body></html>
